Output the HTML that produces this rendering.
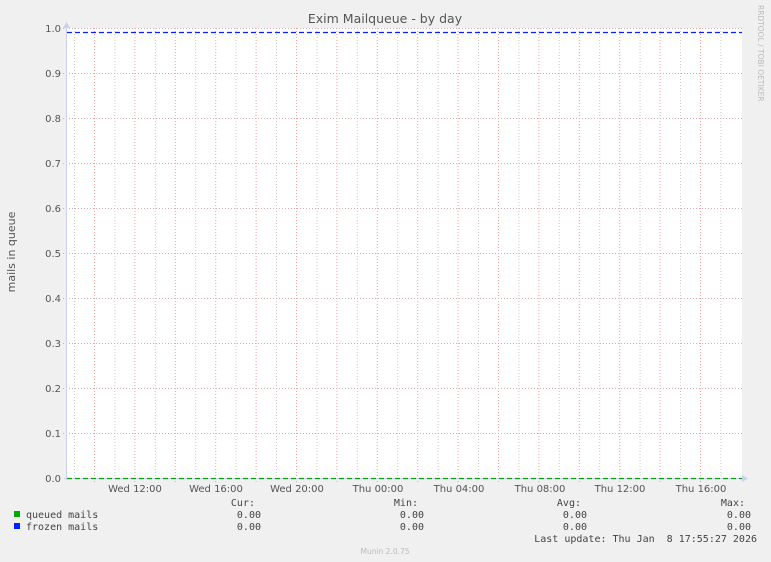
<!DOCTYPE html>
<html><head><meta charset="utf-8"><style>
html,body{margin:0;padding:0;background:#f0f0f0;}
svg{display:block}
text{font-family:"DejaVu Sans","Liberation Sans",sans-serif;}
.m{font-family:"DejaVu Sans Mono","Liberation Mono",monospace;font-size:10px;fill:#444}
</style></head><body>
<svg width="771" height="562" xmlns="http://www.w3.org/2000/svg">
<rect width="771" height="562" fill="#f0f0f0"/>
<rect x="66" y="28" width="676" height="450" fill="#fff"/>
<g stroke-dasharray="1,2" stroke-width="1">
<g stroke="#c8c8c8">
<path d="M74.5 28V478M114.9 28V478M155.3 28V478M195.7 28V478M236.1 28V478M276.5 28V478M316.9 28V478M357.3 28V478M397.7 28V478M438.1 28V478M478.5 28V478M518.9 28V478M559.3 28V478M599.7 28V478M640.1 28V478M680.5 28V478M720.9 28V478"/>
</g>
<g stroke="#f0a0a0">
<path d="M94.5 28V482M134.9 28V482M175.3 28V482M215.7 28V482M256.1 28V482M296.5 28V482M336.9 28V482M377.3 28V482M417.7 28V482M458.1 28V482M498.5 28V482M538.9 28V482M579.3 28V482M619.7 28V482M660.1 28V482M700.5 28V482"/>
</g>
<g stroke="#d0b0b0">
<path d="M63 28.5H742M63 73.5H742M63 118.5H742M63 163.5H742M63 208.5H742M63 253.5H742M63 298.5H742M63 343.5H742M63 388.5H742M63 433.5H742"/>
</g>
</g>
<path d="M66.5 24V480M64 478.5H745" stroke="#ccd0f0" stroke-width="1"/>
<path d="M63 28L66.5 22L70 28Z" fill="#ccd0f0"/>
<path d="M742 475L748 478.5L742 482Z" fill="#ccd0f0"/>
<path d="M67 32.5H742" stroke="#0022ff" stroke-width="1.2" stroke-dasharray="5,3"/>
<path d="M67 478.5H742" stroke="#00aa00" stroke-width="1.2" stroke-dasharray="5,3"/>
<text x="385" y="23" text-anchor="middle" font-size="12.5" fill="#555">Exim Mailqueue - by day</text>
<g font-size="10" fill="#555" text-anchor="end">
<text x="61" y="32">1.0</text><text x="61" y="77">0.9</text><text x="61" y="122">0.8</text>
<text x="61" y="167">0.7</text><text x="61" y="212">0.6</text><text x="61" y="257">0.5</text>
<text x="61" y="302">0.4</text><text x="61" y="347">0.3</text><text x="61" y="392">0.2</text>
<text x="61" y="437">0.1</text><text x="61" y="482">0.0</text>
</g>
<g font-size="10" fill="#555" text-anchor="middle">
<text x="135" y="492">Wed 12:00</text><text x="216" y="492">Wed 16:00</text><text x="297" y="492">Wed 20:00</text>
<text x="378" y="492">Thu 00:00</text><text x="459" y="492">Thu 04:00</text><text x="540" y="492">Thu 08:00</text>
<text x="620" y="492">Thu 12:00</text><text x="701" y="492">Thu 16:00</text>
</g>
<text transform="translate(15,252) rotate(-90)" text-anchor="middle" font-size="11" fill="#555">mails in queue</text>
<text transform="translate(758,5) rotate(90)" font-size="7.5" fill="#bbb">RRDTOOL / TOBI OETIKER</text>
<rect x="14" y="511" width="6" height="6" fill="#00aa00"/>
<rect x="14" y="523" width="6" height="6" fill="#0022ff"/>
<text class="m" x="26" y="518">queued mails</text>
<text class="m" x="26" y="530">frozen mails</text>
<text class="m" x="255" y="506" text-anchor="end">Cur:</text>
<text class="m" x="418" y="506" text-anchor="end">Min:</text>
<text class="m" x="581" y="506" text-anchor="end">Avg:</text>
<text class="m" x="745" y="506" text-anchor="end">Max:</text>
<text class="m" x="261" y="518" text-anchor="end">0.00</text>
<text class="m" x="424" y="518" text-anchor="end">0.00</text>
<text class="m" x="587" y="518" text-anchor="end">0.00</text>
<text class="m" x="751" y="518" text-anchor="end">0.00</text>
<text class="m" x="261" y="530" text-anchor="end">0.00</text>
<text class="m" x="424" y="530" text-anchor="end">0.00</text>
<text class="m" x="587" y="530" text-anchor="end">0.00</text>
<text class="m" x="751" y="530" text-anchor="end">0.00</text>
<text class="m" x="757" y="542" text-anchor="end" xml:space="preserve">Last update: Thu Jan  8 17:55:27 2026</text>
<text x="385" y="554" text-anchor="middle" font-size="7.5" fill="#bbb">Munin 2.0.75</text>
</svg>
</body></html>
